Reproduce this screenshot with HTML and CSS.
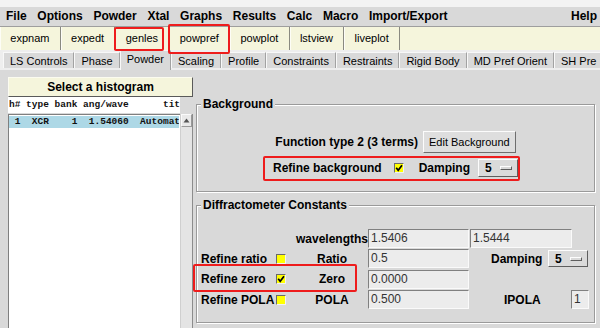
FILE: index.html
```html
<!DOCTYPE html>
<html>
<head>
<meta charset="utf-8">
<link rel="stylesheet" href="styles.css">
</head>
<body>
<div class="app">
  <div class="topstrip"></div>
  <div class="menubar">
    <span>File</span><span>Options</span><span>Powder</span><span>Xtal</span><span>Graphs</span><span>Results</span><span>Calc</span><span>Macro</span><span>Import/Export</span><span class="help">Help</span>
  </div>
  <div class="toolbar">
    <span class="tb">expnam</span><span class="tb">expedt</span><span class="tb">genles</span><span class="tb">powpref</span><span class="tb">powplot</span><span class="tb">lstview</span><span class="tb">liveplot</span>
  </div>
  <div class="tabs">
    <span class="tab">LS Controls</span><span class="tab">Phase</span><span class="tab sel">Powder</span><span class="tab">Scaling</span><span class="tab">Profile</span><span class="tab">Constraints</span><span class="tab">Restraints</span><span class="tab">Rigid Body</span><span class="tab">MD Pref Orient</span><span class="tab">SH Pre</span><span class="tabarrow"></span>
  </div>
  <div class="main">
    <div class="left">
      <div class="histhead">Select a histogram</div>
      <div class="colhead">h# type bank ang/wave      tit</div>
      <div class="listwrap">
        <div class="list">
          <div class="lrow sel"> 1  XCR    1  1.54060  Automat</div>
        </div>
        <div class="vscroll">
          <div class="sarrow"><svg width="7" height="5" viewBox="0 0 7 5"><polygon points="3.5,0.5 6.5,4.5 0.5,4.5" fill="#555"/></svg></div>
        </div>
      </div>
    </div>
    <div class="right">
      <fieldset class="group gbg">
        <legend>Background</legend>
        <div class="frow">
          <span class="lbl">Function type 2 (3 terms)</span>
          <span class="btn">Edit Background</span>
        </div>
        <div class="rrow">
          <span class="lbl">Refine background</span>
          <span class="chk on"><svg width="8" height="8" viewBox="0 0 8 8"><polyline points="1.2,3.8 3.2,6.3 7,1.2" fill="none" stroke="#000" stroke-width="1.7"/></svg></span>
          <span class="lbl">Damping</span>
          <span class="mbtn">5<i class="ind"></i></span>
        </div>
      </fieldset>
      <fieldset class="group gdiff">
        <legend>Diffractometer Constants</legend>
        <div class="drow">
          <span class="c1"></span><span class="cbsp"></span>
          <span class="c3 rt">wavelengths</span>
          <span class="entry">1.5406</span>
          <span class="entry e2">1.5444</span>
        </div>
        <div class="drow">
          <span class="c1">Refine ratio</span><span class="chk"></span>
          <span class="c3">Ratio</span>
          <span class="entry">0.5</span>
          <span class="damp">Damping</span>
          <span class="mbtn sm">5<i class="ind"></i></span>
        </div>
        <div class="drow">
          <span class="c1">Refine zero</span><span class="chk on"><svg width="8" height="8" viewBox="0 0 8 8"><polyline points="1.2,3.8 3.2,6.3 7,1.2" fill="none" stroke="#000" stroke-width="1.7"/></svg></span>
          <span class="c3">Zero</span>
          <span class="entry">0.0000</span>
        </div>
        <div class="drow">
          <span class="c1">Refine POLA</span><span class="chk"></span>
          <span class="c3">POLA</span>
          <span class="entry">0.500</span>
          <span class="ipola">IPOLA</span>
          <span class="entry small">1</span>
        </div>
      </fieldset>
    </div>
  </div>
  <div class="mark m1"></div>
  <div class="mark m2"></div>
  <div class="mark m3"></div>
  <div class="mark m4"></div>
</div>
</body>
</html>
```
FILE: styles.css
```css
* { box-sizing: border-box; }
html, body { margin: 0; padding: 0; }
body {
  width: 600px; height: 328px; overflow: hidden;
  background: #d9d9d9;
  font-family: "Liberation Sans", Arial, sans-serif;
  color: #000;
}
.app {
  position: relative; width: 600px; height: 328px;
  display: flex; flex-direction: column; overflow: hidden;
}
.topstrip { flex: none; height: 7px; background: #f3f3f3; }
.menubar {
  flex: none; height: 19px; display: flex; gap: 10.7px;
  padding: 0 3px 0 6px;
  font-size: 12px; font-weight: bold; line-height: 19px;
  background: #d9d9d9;
}
.help { margin-left: auto; }

.toolbar {
  flex: none; height: 24px; display: flex;
  background: #f5f5dc; border-top: 1px solid #9e9e9e;
}
.tb {
  flex: none; white-space: nowrap;
  font-size: 11px; line-height: 23px; padding: 0 10.3px;
  border-right: 1px solid #8a8a80;
  box-shadow: inset 1px 0 0 #fdfdf6;
}

.tabs {
  flex: none; height: 20px; display: flex; align-items: flex-end;
  padding: 0 0 2px 3px; background: #eeeeee; overflow: hidden;
}
.tab {
  flex: none; white-space: nowrap;
  height: 16px; padding: 1px 6px 0; font-size: 11px; line-height: 14px;
  background: #d9d9d9;
  border-left: 1px solid #f8f8f8; border-top: 1px solid #f8f8f8;
  border-right: 1px solid #a2a2a2;
}
.tab.sel { height: 20px; margin-bottom: -2px; padding-top: 1px; }
.tabarrow { flex: none; width: 2px; height: 9px; background: #111; margin: 0 0 3px 1px; }

.main { flex: 1; display: flex; min-height: 0; }
.left {
  flex: none; width: 185px; margin-left: 8px; padding-top: 7px;
  display: flex; flex-direction: column;
}
.histhead {
  flex: none; height: 20px; background: #f5f5dc;
  border: 1px solid; border-color: #fbfbf0 #5a5a5a #5a5a5a #fbfbf0;
  font-size: 12px; font-weight: bold; line-height: 18px; text-align: center;
}
.colhead {
  flex: none; width: 172px; height: 16px; background: #fff;
  font-family: "Liberation Mono", "Courier New", monospace; font-size: 9.5px; font-weight: bold;
  line-height: 16px; padding-left: 1px; white-space: pre; overflow: hidden; color: #111;
}
.listwrap { flex: 1; display: flex; margin-top: 1px; min-height: 0; }
.list {
  width: 172px; background: #fff;
  border-left: 1px solid #7f7f7f; border-top: 1px solid #7f7f7f;
  padding-top: 1px; overflow: hidden;
}
.lrow {
  height: 12px; margin-right: 1px;
  font-family: "Liberation Mono", "Courier New", monospace; font-size: 9.5px; font-weight: bold;
  line-height: 12px; white-space: pre; overflow: hidden; color: #111;
}
.lrow.sel { background: #add8e6; }
.vscroll {
  width: 13px; background: #e4e4e4;
  border-left: 1px solid #cfcfcf; border-right: 1px solid #8c8c8c;
}
.sarrow {
  height: 13px; display: flex; align-items: center; justify-content: center;
  background: #e9e9e9;
  border: 1px solid; border-color: #fafafa #9a9a9a #9a9a9a #fafafa;
}

.right { flex: 1; padding: 27px 5px 0 3px; min-width: 0; }
.group {
  margin: 0; padding: 0 4px; min-width: 0;
  border: 1px solid #9a9a9a;
  box-shadow: inset 1px 1px 0 #fff, 1px 1px 0 #fff;
}
.group legend {
  margin-left: 0; padding: 0 2px;
  font-size: 12px; font-weight: bold; line-height: 14px;
  background: #d9d9d9;
}
.gbg { padding-top: 20px; padding-bottom: 13px; }
.gdiff { margin-top: 6px; padding-top: 16.5px; padding-bottom: 12px; }

.lbl { font-size: 12px; font-weight: bold; white-space: nowrap; }
.frow { height: 22px; display: flex; align-items: center; justify-content: center; gap: 5px; }
.btn {
  height: 22px; padding: 0 5px; font-size: 11px; line-height: 20px;
  background: #dedede;
  border: 1px solid; border-color: #fcfcfc #6e6e6e #6e6e6e #fcfcfc;
}
.rrow {
  height: 20px; margin-top: 5px;
  display: flex; align-items: center; justify-content: center;
}
.rrow .chk { margin: 0 15px 0 12px; }
.rrow .mbtn { margin-left: 8px; }

.chk {
  flex: none; width: 10px; height: 10px; background: #ffff00;
  border: 1px solid; border-color: #6a6a6a #f2f2f2 #f2f2f2 #6a6a6a;
  display: flex; align-items: center; justify-content: center;
}
.mbtn {
  flex: none; width: 40px; height: 18px;
  display: flex; align-items: center; padding-left: 6px;
  font-size: 12px; font-weight: bold;
  background: #dadada;
  border: 1px solid; border-color: #fcfcfc #5e5e5e #5e5e5e #fcfcfc;
}
.mbtn.sm { height: 17px; }
.ind {
  width: 12px; height: 4px; margin-left: 8px;
  border: 1px solid; border-color: #fdfdfd #5e5e5e #5e5e5e #fdfdfd;
  background: #d9d9d9;
}

.drow { height: 20.3px; display: flex; align-items: center; }
.c1 { flex: none; width: 75px; font-size: 12px; font-weight: bold; white-space: nowrap; }
.cbsp { flex: none; width: 10px; }
.c3 { flex: none; width: 72px; margin-left: 10px; font-size: 12px; font-weight: bold; text-align: center; white-space: nowrap; }
.c3.rt { text-align: right; }
.entry {
  flex: none; width: 101px; height: 19px; padding-left: 2px;
  font-size: 12px; line-height: 17px; color: #333;
  background: #ececec;
  border: 1px solid; border-color: #808080 #fafafa #fafafa #808080;
}
.entry.e2 { width: 102px; margin-left: 1px; }
.entry.small { width: 18px; }
.damp { flex: none; width: 57px; margin-left: 22px; font-size: 12px; font-weight: bold; }
.ipola { flex: none; width: 67px; margin-left: 35px; font-size: 12px; font-weight: bold; }

.mark { position: absolute; border: 2px solid #ee1c1c; border-radius: 2px; }
.m1 { left: 114px; top: 27px; width: 50px; height: 24px; }
.m2 { left: 168px; top: 24px; width: 62px; height: 30px; }
.m3 { left: 263px; top: 156px; width: 257px; height: 25px; }
.m4 { left: 193px; top: 264px; width: 164px; height: 28px; }
```
